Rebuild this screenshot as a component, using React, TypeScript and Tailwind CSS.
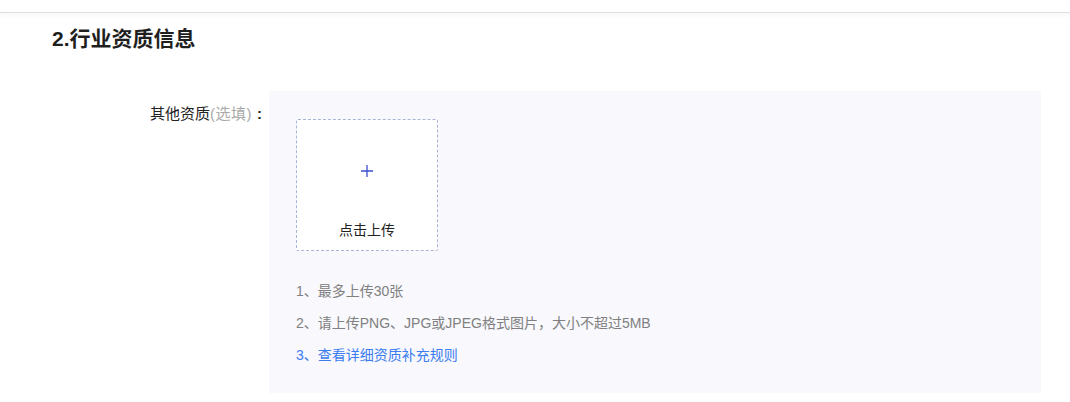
const font = "font-['Helvetica_Neue','Liberation_Sans','Noto_Sans_CJK_SC',sans-serif]"

export default function App() {
  return (
    <div className={`w-[1070px] h-[402px] bg-white overflow-hidden ${font}`}>
      <div className="h-[13px] border-b border-[#dedede] shadow-[0_2px_6px_rgba(0,0,0,0.04)]" />

      <h2 className="pl-[52px] mt-[12px] text-[21px] leading-[28px] font-bold text-[#1f1f1f]">
        2.行业资质信息
      </h2>

      <div className="flex mt-[38px]">
        <div className="w-[262px] shrink-0 pt-[13px] text-right text-[15px] leading-[20px] text-[#222]">
          其他资质<span className="text-[#aaa] tracking-[0.5px]">(选填)</span>
          <span className="ml-[5px] font-bold">:</span>
        </div>

        <div className="ml-[7px] w-[772px] h-[302px] bg-[#f8f8fd] pl-[27px] pt-[28px]">
          <div className="w-[142px] h-[132px] bg-white border border-dashed border-[#a9b3d6] rounded-[2px] flex flex-col items-center">
            <svg width="14" height="14" viewBox="0 0 14 14" className="mt-[44px]">
              <path d="M7 1v12M1 7h12" stroke="#3a4fd0" strokeWidth="1.3" fill="none" />
            </svg>
            <span className="mt-[43px] text-[14px] leading-[18px] text-[#222]">点击上传</span>
          </div>

          <ul className="mt-[24px] text-[14px] leading-[32px] text-[#808080]">
            <li>1、最多上传30张</li>
            <li>2、请上传PNG、JPG或JPEG格式图片，大小不超过5MB</li>
            <li className="text-[#3b7cf0]">3、查看详细资质补充规则</li>
          </ul>
        </div>
      </div>
    </div>
  )
}
